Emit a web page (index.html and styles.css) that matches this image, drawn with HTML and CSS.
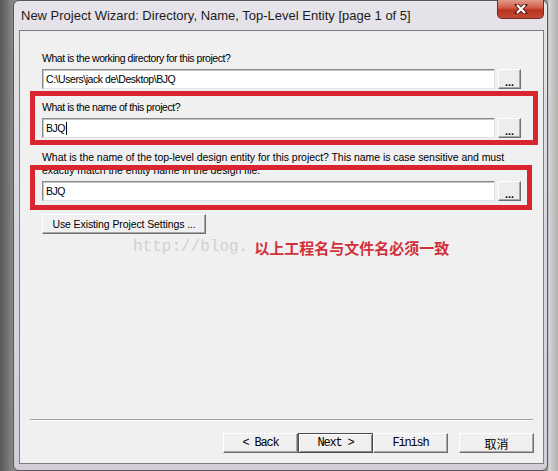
FILE: index.html
```html
<!DOCTYPE html>
<html lang="en">
<head>
  <meta charset="UTF-8">
  <title>New Project Wizard</title>
  <link rel="stylesheet" href="styles.css">
</head>
<body>

  <!-- Вікно майстра -->
  <div class="window">
    <div class="titlebar">
      <span class="title">New Project Wizard: Directory, Name, Top-Level Entity [page 1 of 5]</span>
      <button class="close" type="button">
        <svg width="14" height="10" viewBox="0 0 14 10">
          <path d="M3 1 L11 9 M11 1 L3 9" stroke="#5a1e16" stroke-width="4" stroke-linecap="square"/>
          <path d="M3 1 L11 9 M11 1 L3 9" stroke="#ffffff" stroke-width="2.2"/>
        </svg>
      </button>
    </div>

    <div class="client">
      <div class="label">What is the working directory for this project?</div>
      <div class="row">
        <div class="field">C:\Users\jack de\Desktop\BJQ</div>
        <button class="browse" type="button">...</button>
      </div>

      <div class="label label-name">What is the name of this project?</div>
      <div class="row">
        <div class="field">BJQ<span class="caret"></span></div>
        <button class="browse" type="button">...</button>
      </div>

      <div class="label label-entity">What is the name of the top-level design entity for this project? This name is case sensitive and must<br>exactly match the entity name in the design file.</div>
      <div class="row">
        <div class="field">BJQ</div>
        <button class="browse" type="button">...</button>
      </div>

      <button class="push existing" type="button">Use Existing Project Settings ...</button>

      <div class="note">
        <span class="watermark">http://blog.</span>
        <span class="hint">以上工程名与文件名必须一致</span>
      </div>

      <!-- Червоні рамки поверх форми -->
      <div class="mark mark-name"></div>
      <div class="mark mark-entity"></div>

      <div class="footer">
        <div class="separator"></div>
        <div class="buttons">
          <button class="nav" type="button">&lt; Back</button>
          <button class="nav nav-default" type="button">Next &gt;</button>
          <button class="nav" type="button">Finish</button>
          <button class="nav nav-cancel" type="button">取消</button>
        </div>
      </div>
    </div>
  </div>

</body>
</html>
```

FILE: styles.css
```css
/* Фон довкола вікна */
html, body {
  height: 471px;
}
body {
  margin: 0;
  overflow: hidden;
  background: linear-gradient(to right, #585858 0, #858585 12px, #8e8e8e 547px, #d6d6d6 549px, #c4c4c4 553px, #b0b0b0 558px);
  font-family: "Liberation Sans", Arial, sans-serif;
}
/* Рамка вікна */
.window {
  margin-left: 13px;
  width: 535px;
  height: 471px;
  box-sizing: border-box;
  border: 1px solid #5a5660;
  border-radius: 6px;
  padding: 0 3px 6px 5px;
  background: linear-gradient(#e6e3ea, #dcd8e2 40%, #d3cdd9);
  display: flex;
  flex-direction: column;
}
.titlebar {
  height: 29px;
  display: flex;
  align-items: center;
  padding-left: 2px;
}
.title {
  font-size: 13px;
  color: #1b1b1b;
  padding-bottom: 1px;
}
.close {
  margin-left: auto;
  align-self: flex-start;
  margin-top: -1px;
  width: 47px;
  height: 19px;
  padding: 0;
  border: 1px solid #6b2c25;
  border-top: none;
  border-radius: 0 0 5px 5px;
  background: linear-gradient(#e39a8c, #cf5a46 45%, #b8341f 55%, #c44a35);
  display: flex;
  align-items: center;
  justify-content: center;
}
/* Клієнтська область */
.client {
  flex: 1;
  position: relative;
  border: 1px solid #7d7d7d;
  background: #f0f0f0;
  padding: 21px 22px 10px 22px;
  display: flex;
  flex-direction: column;
}
.label {
  font-size: 10.5px;
  letter-spacing: -0.45px;
  line-height: 13px;
  white-space: nowrap;
  color: #000;
}
.label-name {
  margin-top: 12px;
}
.label-entity {
  margin-top: 13px;
  letter-spacing: -0.05px;
}
.row {
  display: flex;
  gap: 3px;
  height: 20px;
  margin-top: 4px;
}
.field {
  flex: 1;
  box-sizing: border-box;
  background: #fff;
  border: 1px solid;
  border-color: #8a8a8a #e2e2e2 #e2e2e2 #8a8a8a;
  box-shadow: inset 1px 1px 0 #c4c4c4;
  padding-left: 3px;
  font-size: 10.5px;
  letter-spacing: -0.45px;
  line-height: 18px;
  color: #000;
}
.caret {
  display: inline-block;
  width: 1px;
  height: 13px;
  margin-left: 1px;
  background: #000;
  vertical-align: -3px;
}
.browse {
  width: 23px;
  height: 20px;
  padding: 5px 0 0 0;
  box-sizing: border-box;
  background: #ededed;
  border: 1px solid;
  border-color: #fff #6f6f6f #6f6f6f #fff;
  box-shadow: inset -1px -1px 0 #a8a8a8;
  font-family: "Liberation Sans", Arial, sans-serif;
  font-size: 11px;
  font-weight: bold;
  line-height: 10px;
  color: #000;
}
.push {
  background: #f0f0f0;
  border: 1px solid;
  border-color: #fff #6f6f6f #6f6f6f #fff;
  box-shadow: inset -1px -1px 0 #a8a8a8;
  color: #000;
  padding: 0;
}
.existing {
  align-self: flex-start;
  margin-top: 13px;
  width: 164px;
  height: 20px;
  font-family: "Liberation Sans", Arial, sans-serif;
  font-size: 10.5px;
  letter-spacing: -0.1px;
}
.note {
  display: flex;
  align-items: center;
  margin-top: 4px;
  height: 18px;
  padding-left: 91px;
}
.watermark {
  font-family: "Liberation Mono", monospace;
  font-size: 16px;
  color: #d0d0d0;
}
.hint {
  margin-left: 6px;
  font-family: "Noto Sans CJK SC", sans-serif;
  font-size: 15px;
  font-weight: bold;
  color: #d2303a;
}
/* Червоні позначки */
.mark {
  position: absolute;
  left: 10px;
  box-sizing: border-box;
  border: 5px solid #d9252f;
}
.mark-name {
  top: 60px;
  width: 508px;
  height: 54px;
}
.mark-entity {
  top: 134px;
  width: 502px;
  height: 45px;
}
/* Нижня панель з кнопками */
.footer {
  margin-top: auto;
}
.separator {
  margin: 0 -12px;
  border-top: 1px solid #a0a0a0;
  border-bottom: 1px solid #fff;
}
.buttons {
  display: flex;
  justify-content: flex-end;
  margin: 12px -13px 0 0;
}
.nav {
  width: 75px;
  height: 20px;
  padding: 0;
  background: #f0f0f0;
  border: 1px solid;
  border-color: #fff #6f6f6f #6f6f6f #fff;
  box-shadow: inset -1px -1px 0 #a8a8a8;
  font-family: "Liberation Mono", monospace;
  font-size: 12px;
  letter-spacing: -1.2px;
  color: #000;
}
.nav-default {
  border: 1px solid #4c4c4c;
  box-shadow: inset 1px 1px 0 #fff, inset -1px -1px 0 #8a8a8a;
}
.nav-cancel {
  margin-left: 11px;
  font-family: "Noto Sans CJK SC", sans-serif;
  letter-spacing: 0;
}
```
